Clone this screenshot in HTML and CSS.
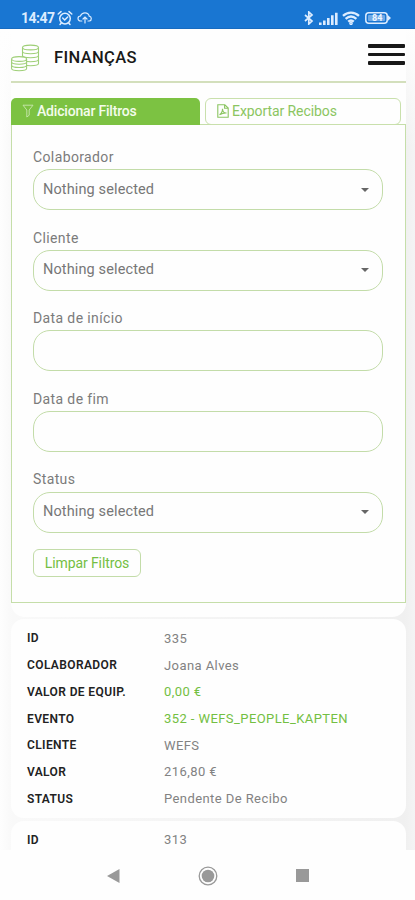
FILE: index.html
```html
<!DOCTYPE html>
<html lang="pt">
<head>
<meta charset="utf-8">
<title>Finanças</title>
<link rel="stylesheet" href="styles.css">
</head>
<body>
<div class="statusbar">
  <span class="clock">14:47</span>
  <svg class="alarm" width="16" height="16" viewBox="0 0 16 16" fill="none" stroke="currentColor" stroke-width="1.5" stroke-linecap="round"><circle cx="8" cy="8.6" r="5.3"/><path d="M1.2 4 4 1.6M14.8 4 12 1.6M5.7 8l2 2 3-3M4.3 13 3 14.5M11.7 13l1.3 1.5"/></svg>
  <svg class="cloud" width="16" height="12" viewBox="0 0 16 12" fill="none" stroke="currentColor" stroke-width="1.2" stroke-linecap="round"><path d="M4.8 9H3.5a2.5 2.5 0 0 1 0-5C4.2 2 6 .8 8 .8s3.8 1.3 4.2 3.3a2.5 2.5 0 0 1 .2 4.9H11M8 11V5M6 7l2-2 2 2"/></svg>
  <span class="spacer"></span>
  <svg class="bt" width="10" height="14" viewBox="0 0 10 14" fill="none" stroke="currentColor" stroke-width="1.7"><path d="m1 4 7 6-3.2 3V1L8 4l-7 6"/></svg>
  <svg class="signal" width="19" height="13" viewBox="0 0 19 13" fill="currentColor"><path d="M0 10.4h2.6V13H0zM4 8.6h2.6V13H4zM8 6h2.6v7H8zM12 3.3h2.6V13H12zM16 .8h2.6V13H16z"/></svg>
  <svg class="wifi" width="18" height="14" viewBox="0 0 18 14" fill="none" stroke="currentColor" stroke-width="2.3"><path d="M1 4.8C5.6.5 12.4.5 17 4.8M3.6 7.9c3.3-2.9 7.5-2.9 10.8 0M6.2 10.7c1.7-1.5 3.9-1.5 5.6 0"/><circle cx="9" cy="12.3" r=".7"/></svg>
  <svg class="battery" width="26" height="12" viewBox="0 0 26 12"><rect x=".8" y=".8" width="21.4" height="10.4" rx="3" fill="none" stroke="currentColor" stroke-width="1.5"/><rect x="3" y="3" width="17" height="6" rx="1" fill="currentColor" opacity=".45"/><path d="M22.8 3 26 6l-3.2 3z" fill="currentColor"/><text x="7" y="9.2" class="level">84</text></svg>
</div>
<main class="page">
  <section class="sheet">
    <header class="header">
      <svg class="coins" width="30" height="28" viewBox="0 0 30 28" fill="#fff" stroke="#9fcf78" stroke-width="1.1"><path d="M11.5 3.5v16c0 3 16 3 16 0v-16"/><ellipse cx="19.5" cy="3.5" rx="8" ry="2.4"/><path d="M11.5 7.5c0 3 16 3 16 0M11.5 11.5c0 3 16 3 16 0M11.5 15.5c0 3 16 3 16 0" fill="none"/><path d="M.6 15v9.5c0 3 15 3 15 0V15"/><ellipse cx="8.1" cy="15" rx="7.5" ry="2.4"/><path d="M.6 18c0 3 15 3 15 0M.6 21.2c0 3 15 3 15 0" fill="none"/></svg>
      <h1>FINANÇAS</h1>
      <div class="menu"><i></i><i></i><i></i></div>
    </header>
    <nav class="tabs">
      <div class="tab active"><svg width="12" height="14" viewBox="0 0 12 14" fill="none" stroke="currentColor" stroke-width=".9"><path d="M1 1.2h10L7.2 6v5.2L4.8 13V6z"/></svg><span>Adicionar Filtros</span></div>
      <div class="tab export"><svg width="12" height="14" viewBox="0 0 12 14" fill="none" stroke="currentColor" stroke-width="1.1"><path d="M.8.8h7L11.2 4v9.2H.8zM7.6.8v3.4h3.6M2.5 10.8c2.4-1.4 3-3.5 3-6 .2 2.8 1.4 4.4 4 4.2-2.5-.3-4.4.4-7 1.8"/></svg><span>Exportar Recibos</span></div>
    </nav>
    <form class="panel">
      <div class="field"><label>Colaborador</label><div class="box"><span>Nothing selected</span><i class="caret"></i></div></div>
      <div class="field"><label>Cliente</label><div class="box"><span>Nothing selected</span><i class="caret"></i></div></div>
      <div class="field"><label>Data de início</label><div class="box"></div></div>
      <div class="field"><label>Data de fim</label><div class="box"></div></div>
      <div class="field"><label>Status</label><div class="box"><span>Nothing selected</span><i class="caret"></i></div></div>
      <div class="clear"><span>Limpar Filtros</span></div>
    </form>
  </section>
  <dl class="record">
    <dt>ID</dt><dd>335</dd>
    <dt>COLABORADOR</dt><dd>Joana Alves</dd>
    <dt>VALOR DE EQUIP.</dt><dd class="green">0,00 €</dd>
    <dt>EVENTO</dt><dd class="green">352 - WEFS_PEOPLE_KAPTEN</dd>
    <dt>CLIENTE</dt><dd>WEFS</dd>
    <dt>VALOR</dt><dd>216,80 €</dd>
    <dt>STATUS</dt><dd>Pendente De Recibo</dd>
  </dl>
  <dl class="record next">
    <dt>ID</dt><dd>313</dd>
  </dl>
</main>
<footer class="navbar">
  <svg width="13" height="14" viewBox="0 0 13 14"><path d="M0 7 12.5 0v14z" fill="#999"/></svg>
  <svg width="20" height="20" viewBox="0 0 20 20"><circle cx="10" cy="10" r="8.8" fill="none" stroke="#999" stroke-width="1.3"/><circle cx="10" cy="10" r="6.3" fill="#999"/></svg>
  <svg width="13" height="13" viewBox="0 0 13 13"><path d="M0 0h13v13H0z" fill="#999"/></svg>
</footer>
</body>
</html>
```
FILE: styles.css
```css
* { box-sizing: border-box; }
body {
  margin: 0;
  height: 900px;
  overflow: hidden;
  background: #fefefe;
  font-family: Roboto, sans-serif;
  color: #777;
  display: flex;
  flex-direction: column;
}
svg { display: block; flex: none; }

.statusbar {
  height: 29px;
  flex: none;
  background: #1976d2;
  border-bottom: 1px solid #176bc0;
  color: #dcecff;
  display: flex;
  align-items: center;
  padding: 8px 24px 0 21px;
}
.clock { width: 36px; font-size: 14px; font-weight: 700; line-height: 16px; letter-spacing: -.5px; white-space: nowrap; }
.cloud { margin-left: 4px; }
.spacer { flex: 1; }
.signal { margin-left: 5px; }
.wifi { margin-left: 4px; }
.battery { margin-left: 5px; }
.level { font: 700 9px Roboto, sans-serif; fill: #eef6ff; }

.page {
  height: 821px;
  flex: none;
  overflow: hidden;
  padding: 0 9px 0 11px;
  background:
    linear-gradient(180deg, #fefefe 0, rgba(254, 254, 254, 0) 120px),
    linear-gradient(90deg, #fefefe 0, #f9f9f9 12px, #f4f4f4 200px, #f0f0f0 405px, #f4f4f4 415px);
}
.sheet {
  height: 588px;
  background: #fefefe;
  border-radius: 0 0 14px 14px;
}
.header {
  height: 54px;
  border-bottom: 2px solid #d3dfbc;
  display: flex;
  align-items: flex-start;
}
.coins { margin-top: 15px; }
h1 {
  margin: 17px 0 0 13px;
  flex: 1;
  color: #191919;
  font-size: 16.5px;
  line-height: 23px;
  font-weight: 500;
  letter-spacing: .35px;
}
.menu { width: 37px; margin: 15px 1px 0 0; display: flex; flex-direction: column; gap: 5px; }
.menu i { height: 3.5px; border-radius: 1px; background: #181818; }

.tabs { height: 41px; padding: 15px 5px 0 0; display: flex; gap: 5px; }
.tab {
  height: 27px;
  font-size: 14px;
  line-height: 16px;
  display: flex;
  align-items: center;
  gap: 3px;
  white-space: nowrap;
}
.active { width: 189px; padding: 0 0 1px 11px; background: #7cc242; border-radius: 5px 5px 0 0; color: #f4fcec; }
.active span { font-weight: 500; letter-spacing: -.19px; }
.active svg { opacity: .65; }
.export { flex: 1; padding: 0 0 1px 11px; border: 1px solid #c9e0ac; border-radius: 6px; color: #8bc561; }
.export span { letter-spacing: -.08px; }

.panel {
  height: 479px;
  padding: 23px 22px 0 21px;
  border: 1px solid #c5dea9;
}
.field { height: 80.6px; }
label { display: block; height: 21.2px; font-size: 14px; line-height: 18px; letter-spacing: .38px; color: #7b7b7b; }
.box {
  height: 41px;
  border: 1px solid #c3dca9;
  border-radius: 17px;
  padding: 0 13px 0 9px;
  display: flex;
  align-items: center;
  justify-content: space-between;
  font-size: 14.5px;
  line-height: 18px;
  letter-spacing: .12px;
}
.caret { border: 4px solid transparent; border-top-color: #666; border-bottom: 0; }
.clear {
  width: 108px;
  height: 28px;
  margin-top: -1.5px;
  border: 1px solid #c3dca9;
  border-radius: 6px;
  color: #74be43;
  font-size: 14px;
  line-height: 26px;
  text-align: center;
  letter-spacing: -.1px;
}

.record {
  height: 199px;
  margin: 1.5px 0 0;
  padding: 6.6px 16px 0;
  border-radius: 13px;
  background: #fefefe;
  display: grid;
  grid-template-columns: 137px 1fr;
  grid-auto-rows: 26.7px;
  align-content: start;
  align-items: center;
  white-space: nowrap;
}
.next { height: 60px; margin-top: 3.5px; padding-top: 5.6px; }
dt { color: #222; font-size: 12px; font-weight: 600; letter-spacing: .38px; }
dd { margin: 0; color: #828282; font-size: 13px; letter-spacing: .42px; }
.green { color: #73bf42; }

.navbar {
  flex: 1;
  background: #fefefe;
  display: flex;
  align-items: center;
  padding: 1px 0 0 106.5px;
  gap: 78px;
}
```
